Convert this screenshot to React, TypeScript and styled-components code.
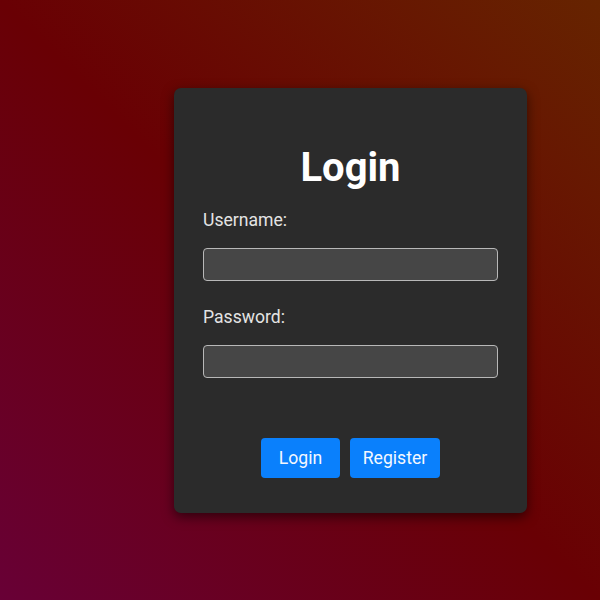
import React from "react";
import styled, { createGlobalStyle } from "styled-components";

const Global = createGlobalStyle`
  html, body { margin: 0; padding: 0; }
  body { font-family: Roboto, "Liberation Sans", sans-serif; }
  * { box-sizing: border-box; }
`;

const Page = styled.div`
  width: 600px;
  height: 600px;
  display: flex;
  align-items: flex-start;
  padding: 88px 0 0 174px;
  background: linear-gradient(45deg, #680036 0%, #690004 50%, #662400 100%);
  overflow: hidden;
`;

const Card = styled.form`
  width: 353px;
  height: 425px;
  background: #2b2b2b;
  border-radius: 7px;
  box-shadow: 0 4px 12px rgba(0, 0, 0, 0.55);
  padding: 0 29px;
  display: flex;
  flex-direction: column;
`;

const Title = styled.h1`
  margin: 56px 0 19px;
  font-size: 40px;
  line-height: 47px;
  font-weight: 700;
  color: #ffffff;
  text-align: center;
`;

const Label = styled.label<{ $top?: number }>`
  display: block;
  font-size: 17.6px;
  line-height: 21px;
  color: #e4e4e4;
  margin-top: ${(p) => p.$top ?? 0}px;
  margin-bottom: 17px;
`;

const Input = styled.input`
  display: block;
  width: 100%;
  height: 33px;
  background: #464646;
  border: 1px solid #b8b8b8;
  border-radius: 4px;
  color: #fff;
  font-size: 16px;
  padding: 0 8px;
  outline: none;
`;

const Actions = styled.div`
  display: flex;
  justify-content: center;
  gap: 10px;
  margin-top: 60px;
`;

const Button = styled.button<{ $width: number }>`
  width: ${(p) => p.$width}px;
  height: 40px;
  padding: 0;
  background: #0a80fc;
  border: none;
  border-radius: 4px;
  color: #f4f8ff;
  font-family: Roboto, "Liberation Sans", sans-serif;
  font-size: 17.6px;
  cursor: pointer;
`;

export default function App() {
  return (
    <>
      <Global />
      <Page>
        <Card onSubmit={(e) => e.preventDefault()}>
          <Title>Login</Title>
          <Label htmlFor="username">Username:</Label>
          <Input id="username" type="text" />
          <Label htmlFor="password" $top={26}>Password:</Label>
          <Input id="password" type="password" />
          <Actions>
            <Button type="submit" $width={79}>Login</Button>
            <Button type="button" $width={90}>Register</Button>
          </Actions>
        </Card>
      </Page>
    </>
  );
}
